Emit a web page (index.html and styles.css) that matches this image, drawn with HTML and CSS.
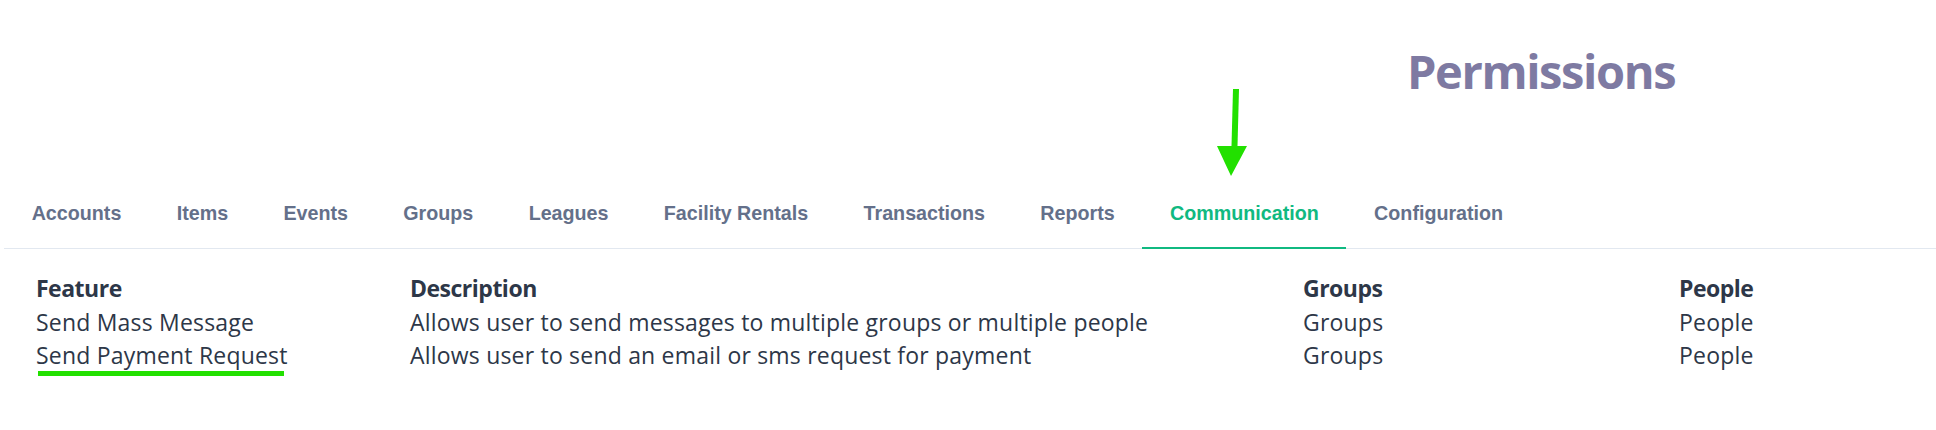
FILE: index.html
```html
<!DOCTYPE html>
<html lang="en">
<head>
<meta charset="utf-8">
<title>Permissions</title>
<link rel="stylesheet" href="styles.css">
</head>
<body>
<header class="page-header">
  <h1 class="title">Permissions</h1>
</header>
<svg class="arrow" width="40" height="92" viewBox="0 0 40 92" aria-hidden="true">
  <path d="M16 0 L22 0 L20.5 57 L14.5 57 Z" fill="#22e000"/>
  <path d="M0 57 L30 57 L14 87 Z" fill="#22e000"/>
</svg>
<nav class="tabs">
  <a class="tab">Accounts</a>
  <a class="tab">Items</a>
  <a class="tab">Events</a>
  <a class="tab">Groups</a>
  <a class="tab">Leagues</a>
  <a class="tab">Facility Rentals</a>
  <a class="tab">Transactions</a>
  <a class="tab">Reports</a>
  <a class="tab active">Communication</a>
  <a class="tab">Configuration</a>
</nav>
<section class="perm-table">
  <div class="row head">
    <div class="cell">Feature</div>
    <div class="cell">Description</div>
    <div class="cell">Groups</div>
    <div class="cell">People</div>
  </div>
  <div class="row">
    <div class="cell">Send Mass Message</div>
    <div class="cell">Allows user to send messages to multiple groups or multiple people</div>
    <div class="cell">Groups</div>
    <div class="cell">People</div>
  </div>
  <div class="row">
    <div class="cell"><span class="marked">Send Payment Request</span></div>
    <div class="cell">Allows user to send an email or sms request for payment</div>
    <div class="cell">Groups</div>
    <div class="cell">People</div>
  </div>
</section>
</body>
</html>
```
FILE: styles.css
```css
html, body {
  margin: 0;
  padding: 0;
  background: #ffffff;
}
body {
  width: 1936px;
  height: 430px;
  position: relative;
  overflow: hidden;
  font-family: "Open Sans", "Noto Sans", sans-serif;
}
.page-header {
  padding: 48px 0 0 1407px;
}
.title {
  margin: 0;
  font-family: "Open Sans", sans-serif;
  font-weight: 700;
  font-size: 47px;
  line-height: 47px;
  color: #7e7aa2;
  letter-spacing: -1.4px;
}
.arrow {
  position: absolute;
  left: 1217px;
  top: 89px;
}
.tabs {
  display: flex;
  margin: 106px 0 0 4px;
  border-bottom: 1px solid #e2e8f0;
}
.tab {
  display: block;
  padding: 0 27.67px 22px;
  font-family: "Liberation Sans", Arial, sans-serif;
  font-weight: 700;
  font-size: 19.7px;
  line-height: 24px;
  color: #64708a;
  border-bottom: 2px solid transparent;
  margin-bottom: -1px;
}
.tab.active {
  color: #10b981;
  border-bottom-color: #10b981;
}
.perm-table {
  margin-top: 23px;
  padding-left: 36px;
  color: #2d3748;
  font-size: 23px;
  line-height: 33.5px;
  letter-spacing: 0.2px;
}
.row {
  display: grid;
  grid-template-columns: 374px 893px 376px auto;
}
.row.head {
  font-weight: 700;
  letter-spacing: -0.5px;
}
.marked {
  position: relative;
}
.marked::after {
  content: "";
  position: absolute;
  left: 2px;
  right: 4px;
  bottom: -5px;
  height: 5px;
  background: #22e000;
}
```
